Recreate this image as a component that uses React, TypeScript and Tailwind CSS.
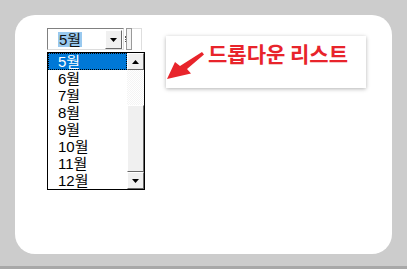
import React from "react";

const months = ["5월", "6월", "7월", "8월", "9월", "10월", "11월", "12월"];

function ScrollButton({ up }: { up?: boolean }) {
    return (
        <div className="w-[17px] h-[17px] bg-[#f0f0f0] border border-t-white border-l-white border-r-[#696969] border-b-[#696969] flex items-center justify-center">
            <svg width="7" height="4" viewBox="0 0 7 4">
                {up ? <path d="M0 4 L3.5 0 L7 4 Z" fill="#000" /> : <path d="M0 0 L7 0 L3.5 4 Z" fill="#000" />}
            </svg>
        </div>
    );
}

export default function App() {
    const font = { fontFamily: '"Liberation Sans", "Noto Sans CJK KR", sans-serif' };
    return (
        <div className="w-[407px] h-[269px] bg-[#cccccc] border-b-[3px] border-[#a8a8a8] pt-[15px] pl-[15px]">
            <div className="w-[377px] h-[239px] bg-white rounded-[20px] flex items-start">
                {/* combo + open list */}
                <div className="ml-[32px] mt-[13px] flex flex-col" style={font}>
                    <div className="flex h-[22px] w-[95px]">
                        <div className="flex w-[77px] h-[22px] border border-t-[#808080] border-l-[#808080] border-r-[#dcdcdc] border-b-[#dcdcdc] bg-white">
                            <div className="flex-1 flex items-center pl-[10px]">
                                <span className="bg-[#99c9ef] text-[15px] leading-[15px] px-[1px] text-[#111]">5월</span>
                            </div>
                            <div className="w-[17px] h-[19px] mt-[1px] mr-[1px] bg-[#f0f0f0] border border-t-white border-l-white border-r-[#696969] border-b-[#696969] flex items-center justify-center">
                                <svg width="7" height="4" viewBox="0 0 7 4">
                                    <path d="M0 0 L7 0 L3.5 4 Z" fill="#000" />
                                </svg>
                            </div>
                        </div>
                        <div className="w-[2px] flex items-center justify-center">
                            <div className="w-[1px] h-[6px] border-l border-dotted border-[#555]" />
                        </div>
                        <div className="w-[6px] h-[22px] border border-[#9a9a9a] bg-[#f4f4f4]" />
                        <div className="flex-1 h-[22px] border-t border-r border-[#dedede]" />
                    </div>
                    <div className="mt-[2px] w-[98px] h-[138px] border border-black flex overflow-hidden bg-white">
                        <div className="flex-1 flex flex-col">
                            {months.map((m, i) => (
                                <div
                                    key={m}
                                    className={
                                        i === 0
                                            ? "h-[17px] shrink-0 bg-[#0078d7] text-white border border-dotted border-black text-[15px] leading-[15px] pl-[9px]"
                                            : "h-[17px] shrink-0 text-black text-[15px] leading-[17px] pl-[10px]"
                                    }
                                >
                                    {m}
                                </div>
                            ))}
                        </div>
                        <div className="w-[17px] flex flex-col">
                            <ScrollButton up />
                            <div className="h-[35px] bg-[repeating-conic-gradient(#f4f4f4_0_25%,#ffffff_0_50%)] bg-[length:2px_2px]" />
                            <div className="h-[67px] bg-[#f0f0f0] border border-t-white border-l-white border-r-[#696969] border-b-[#696969]" />
                            <ScrollButton />
                        </div>
                    </div>
                </div>

                {/* callout */}
                <div className="ml-[21px] mt-[21px] w-[200px] h-[52px] bg-white shadow-[0_1px_4px_rgba(0,0,0,0.3)] flex items-start">
                    <svg width="42" height="50" viewBox="0 0 42 50" className="shrink-0">
                        <path d="M36 16 L38 18.5 L21 33 L25 37.5 L1 43 L9 26 L14 30 Z" fill="#e8242b" />
                    </svg>
                    <span
                        className="mt-[4px] text-[21px] leading-[26px] font-bold text-[#e8242b] whitespace-nowrap"
                        style={{ fontFamily: '"Noto Sans CJK KR", sans-serif' }}
                    >
                        드롭다운 리스트
                    </span>
                </div>
            </div>
        </div>
    );
}
